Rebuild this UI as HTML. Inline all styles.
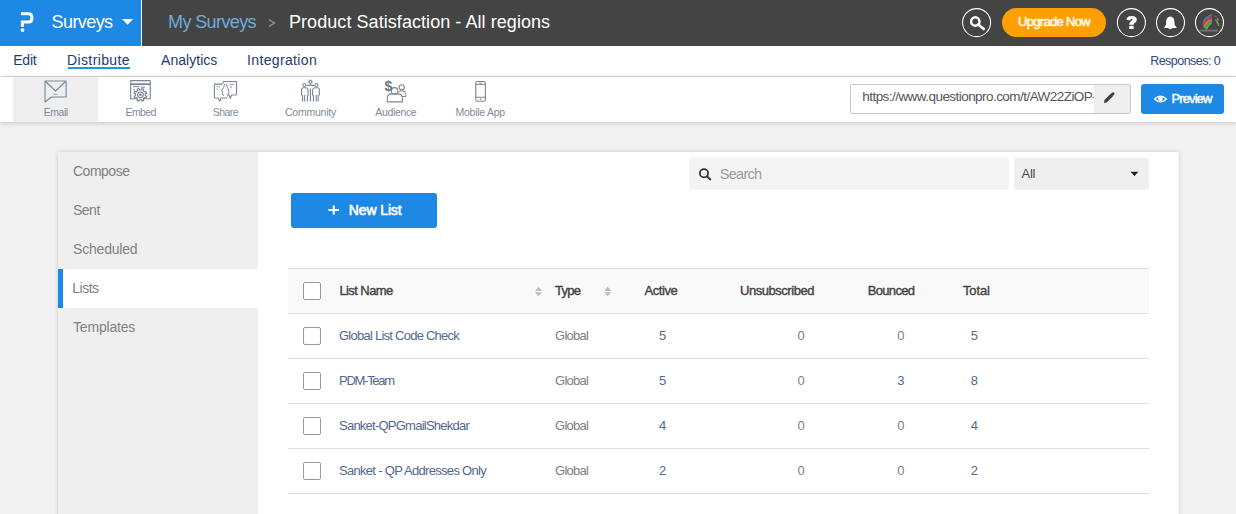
<!DOCTYPE html>
<html><head><meta charset="utf-8">
<style>
*{box-sizing:border-box;margin:0;padding:0}
html,body{width:1236px;height:514px;overflow:hidden;background:#f2f2f2;font-family:"Liberation Sans",sans-serif}
.a{position:absolute;white-space:nowrap;line-height:1}
#hdr{position:absolute;left:0;top:0;width:1236px;height:46px;background:#444}
#brand{position:absolute;left:0;top:0;width:141px;height:46px;background:#1e88e5}
#sep{position:absolute;left:141px;top:0;width:1px;height:46px;background:#fafafa}
#nav{position:absolute;left:0;top:46px;width:1236px;height:31px;background:#fff;border-bottom:1px solid #dcdcdc}
#tools{position:absolute;left:0;top:77px;width:1236px;height:45px;background:#fff;box-shadow:0 1px 5px rgba(0,0,0,.2)}
.nv{font-size:14px;color:#1d3c6e;top:53.2px}
.tl{font-size:10.5px;color:#7f8a9c;top:106.6px}
.card{position:absolute;left:58px;top:152px;width:1121px;height:380px;background:#fff;box-shadow:0 0 5px rgba(0,0,0,.17)}
.side{position:absolute;left:58px;top:152px;width:200px;height:380px;background:#efefef}
.si{font-size:14px;color:#818181;left:73px;letter-spacing:-0.5px}
.hd{font-size:13px;color:#444;-webkit-text-stroke:0.4px #444;top:284px}
.ln{font-size:13px;color:#52688f;left:339px}
.gl{font-size:13px;color:#808080;left:555px;letter-spacing:-0.73px}
.nb{font-size:13px;color:#52688f}
.ng{font-size:13px;color:#808080}
.cb{position:absolute;left:303px;width:18px;height:18px;border:1px solid #9a9a9a;border-radius:2px;background:#fff}
.hl{position:absolute;left:288px;width:861px;height:1px;background:#dedede}
</style></head><body>
<div id="hdr">
  <div id="brand"></div>
  <div id="sep"></div>
</div>
<div class="a" style="left:51.5px;top:12.9px;color:#fff;font-size:18px;letter-spacing:-0.57px">Surveys</div>
<div class="a" style="left:168px;top:12.5px;color:#70aad9;font-size:18px;letter-spacing:-0.6px">My Surveys</div>
<div class="a" style="left:289px;top:12.5px;color:#fff;font-size:18px;letter-spacing:0.06px">Product Satisfaction - All regions</div>
<div class="a" style="left:1002px;top:8px;width:104px;height:29px;background:#ff9f00;border-radius:15px"></div>
<div class="a" style="left:1018px;top:15px;color:#fff;font-size:13px;-webkit-text-stroke:0.45px #fff;letter-spacing:-0.68px">Upgrade Now</div>

<div id="nav"></div>
<div class="a nv" style="left:13.2px;letter-spacing:-0.2px">Edit</div>
<div class="a nv" style="left:67px;letter-spacing:0.38px">Distribute</div>
<div class="a" style="left:68px;top:67px;width:62px;height:2px;background:#1a9ad9"></div>
<div class="a nv" style="left:161px;letter-spacing:0.04px">Analytics</div>
<div class="a nv" style="left:247px;letter-spacing:0.36px">Integration</div>
<div class="a" style="left:1150.2px;top:55.4px;color:#2a4b80;font-size:12.5px;letter-spacing:-0.53px">Responses: 0</div>

<div id="tools"></div>
<div class="a" style="left:13px;top:77px;width:85px;height:45px;background:#eeeeee"></div>
<div class="a tl" style="left:43.7px;letter-spacing:-0.45px">Email</div>
<div class="a tl" style="left:125.6px;letter-spacing:-0.65px">Embed</div>
<div class="a tl" style="left:212.7px;letter-spacing:-0.5px">Share</div>
<div class="a tl" style="left:285px;letter-spacing:-0.23px">Community</div>
<div class="a tl" style="left:375.3px;letter-spacing:-0.35px">Audience</div>
<div class="a tl" style="left:455.5px;letter-spacing:-0.25px">Mobile App</div>

<div class="a" style="left:850px;top:84px;width:281px;height:30px;border:1px solid #c8c8c8;border-radius:2px;background:#fff;overflow:hidden">
  <div class="a" style="left:11.3px;top:5.3px;font-size:13.5px;color:#555;letter-spacing:-0.55px">https://www.questionpro.com/t/AW22ZiOP-</div>
  <div class="a" style="left:243px;top:0;width:37px;height:28px;background:#eeeeee"></div>
</div>
<div class="a" style="left:1141px;top:84px;width:83px;height:30px;background:#1e88e5;border-radius:3px"></div>
<div class="a" style="left:1171.6px;top:92.3px;color:#fff;font-size:13px;-webkit-text-stroke:0.45px #fff;letter-spacing:-0.92px">Preview</div>

<div class="card"></div>
<div class="side"></div>
<div class="a" style="left:58px;top:269px;width:200px;height:39px;background:#fff"></div>
<div class="a" style="left:58px;top:269px;width:5px;height:39px;background:#1e88e5"></div>
<div class="a si" style="top:163.8px">Compose</div>
<div class="a si" style="top:202.9px">Sent</div>
<div class="a si" style="top:242px;letter-spacing:-0.19px">Scheduled</div>
<div class="a si" style="top:281.1px;left:72.3px">Lists</div>
<div class="a si" style="top:320.2px;letter-spacing:-0.19px">Templates</div>

<div class="a" style="left:689px;top:158px;width:320px;height:32px;background:#f4f4f4;border-radius:2px"></div>
<div class="a" style="left:719.7px;top:166.7px;font-size:14.5px;color:#9b9b9b;letter-spacing:-0.69px">Search</div>
<div class="a" style="left:1014px;top:158px;width:135px;height:32px;background:#efefef;border-radius:3px"></div>
<div class="a" style="left:1021.6px;top:167.2px;font-size:13px;color:#4a4a4a;letter-spacing:-0.32px">All</div>

<div class="a" style="left:291px;top:193px;width:146px;height:35px;background:#1e88e5;border-radius:3px"></div>
<div class="a" style="left:348.8px;top:203.2px;color:#fff;font-size:14px;-webkit-text-stroke:0.6px #fff;letter-spacing:-0.12px">New List</div>

<div class="a" style="left:288px;top:268px;width:861px;height:46px;background:#f9f9f9"></div>
<div class="hl" style="top:268px"></div>
<div class="hl" style="top:313px"></div>
<div class="hl" style="top:358px"></div>
<div class="hl" style="top:403px"></div>
<div class="hl" style="top:448px"></div>
<div class="hl" style="top:493px"></div>

<div class="cb" style="top:282px"></div>
<div class="cb" style="top:327px"></div>
<div class="cb" style="top:372px"></div>
<div class="cb" style="top:417px"></div>
<div class="cb" style="top:462px"></div>

<div class="a hd" style="left:339.4px;letter-spacing:-0.58px">List Name</div>
<div class="a hd" style="left:555px;letter-spacing:-0.7px">Type</div>
<div class="a hd" style="left:644.5px;letter-spacing:-0.43px">Active</div>
<div class="a hd" style="left:740px;letter-spacing:-0.46px">Unsubscribed</div>
<div class="a hd" style="left:867.7px;letter-spacing:-0.66px">Bounced</div>
<div class="a hd" style="left:963px;letter-spacing:-0.15px">Total</div>

<div class="a ln" style="top:329.2px;letter-spacing:-0.75px">Global List Code Check</div>
<div class="a ln" style="top:374.2px;letter-spacing:-1.27px">PDM-Team</div>
<div class="a ln" style="top:419.2px;letter-spacing:-0.76px">Sanket-QPGmailShekdar</div>
<div class="a ln" style="top:464.2px;letter-spacing:-0.7px">Sanket - QP Addresses Only</div>
<div class="a gl" style="top:329.2px">Global</div>
<div class="a gl" style="top:374.2px">Global</div>
<div class="a gl" style="top:419.2px">Global</div>
<div class="a gl" style="top:464.2px">Global</div>

<div class="a nb" style="left:659px;top:329.2px">5</div>
<div class="a ng" style="left:797.5px;top:329.2px">0</div>
<div class="a ng" style="left:897.3px;top:329.2px">0</div>
<div class="a nb" style="left:970.8px;top:329.2px">5</div>

<div class="a nb" style="left:659px;top:374.2px">5</div>
<div class="a ng" style="left:797.5px;top:374.2px">0</div>
<div class="a nb" style="left:897.3px;top:374.2px">3</div>
<div class="a nb" style="left:970.8px;top:374.2px">8</div>

<div class="a nb" style="left:659px;top:419.2px">4</div>
<div class="a ng" style="left:797.5px;top:419.2px">0</div>
<div class="a ng" style="left:897.3px;top:419.2px">0</div>
<div class="a nb" style="left:970.8px;top:419.2px">4</div>

<div class="a nb" style="left:659px;top:464.2px">2</div>
<div class="a ng" style="left:797.5px;top:464.2px">0</div>
<div class="a ng" style="left:897.3px;top:464.2px">0</div>
<div class="a nb" style="left:970.8px;top:464.2px">2</div>

<!-- ICONS overlay -->
<svg width="1236" height="514" viewBox="0 0 1236 514" style="position:absolute;left:0;top:0">
  <!-- P logo -->
  <path d="M20.9 13.7 H28.6 Q31.8 13.7 31.8 16.9 V18.7 Q31.8 21.9 28.6 21.9 H22.4 V26.8" fill="none" stroke="#fff" stroke-width="3"/>
  <circle cx="22.5" cy="30.1" r="1.9" fill="#fff"/>
  <!-- brand caret -->
  <path d="M122 19 H133.2 L127.6 24.8 Z" fill="#fff"/>
  <!-- breadcrumb chevron -->
  <path d="M269 19.6 L274.5 23 L269 26.4" fill="none" stroke="#8a8a8a" stroke-width="1.6"/>
  <!-- header circles -->
  <circle cx="976.6" cy="22.6" r="14" fill="none" stroke="#fff" stroke-width="1.05"/>
  <circle cx="1131.4" cy="22.6" r="14" fill="none" stroke="#fff" stroke-width="1.05"/>
  <circle cx="1170.5" cy="22.6" r="14" fill="none" stroke="#fff" stroke-width="1.05"/>
  <circle cx="1209.5" cy="22.6" r="14" fill="none" stroke="#fff" stroke-width="1.05"/>
  <!-- magnifier -->
  <circle cx="975.3" cy="21.5" r="4.2" fill="none" stroke="#fff" stroke-width="2.4"/>
  <path d="M978.2 24.5 L983.8 29" stroke="#fff" stroke-width="2.6" stroke-linecap="round"/>
  <!-- bell -->
  <path d="M1170.3 16.5 Q1166.5 17 1166.2 21 L1166 24.5 Q1165.5 26 1163.9 27.9 H1176.9 Q1175.1 26 1174.6 24.5 L1174.4 21 Q1174.1 17 1170.3 16.5 Z" fill="#fff"/>
  <path d="M1168.2 27.9 Q1170.3 30.6 1172.5 27.9 Z" fill="#fff"/>
  <!-- help -->
  <path d="M1126.5 19.8 Q1126.7 15.9 1131.6 15.9 Q1136.8 15.9 1136.8 19.6 Q1136.8 21.7 1134.8 22.9 Q1133.7 23.6 1133.7 24.7 H1129.2 Q1129.2 22.6 1131 21.3 Q1132.4 20.5 1132.4 19.7 Q1132.4 18.8 1131.5 18.8 Q1130.5 18.8 1130.3 20.4 Z" fill="#fff"/>
  <rect x="1129.2" y="25.8" width="4.5" height="3.2" fill="#fff"/>
  <!-- rainbow avatar -->
    <rect x="1199.5" y="29.6" width="18.5" height="2" fill="#6e6e6e"/>
  <g fill="none" stroke-width="1.5" stroke-linecap="butt" opacity=".78">
    <path d="M1203 23.5 Q1205 16.5 1212 15" stroke="#2e9fd4"/>
    <path d="M1203.2 25 Q1205.3 18 1212 16.8" stroke="#cf3b8c"/>
    <path d="M1203.6 26.3 Q1206 19.5 1212 18.3" stroke="#e8482a"/>
    <path d="M1204 27.5 Q1206.5 21 1212 19.8" stroke="#f5a11c"/>
    <path d="M1205 28.6 Q1207.5 23 1211.8 21.3" stroke="#3fb3cf"/>
    <path d="M1206.2 29.6 Q1208.5 24.5 1211.6 22.6" stroke="#88c240"/>
    <path d="M1214.3 16.2 L1216.6 16.9" stroke="#cf3b8c"/>
    <path d="M1217.2 18.6 L1218.4 19.9" stroke="#f5a11c"/>
    <path d="M1215 19.6 Q1217 20.5 1218 22" stroke="#3fb3cf"/>
    <path d="M1216.4 21.8 Q1218.4 23.4 1219 25.8" stroke="#88c240"/>
  </g>

  <!-- toolbar icons -->
  <g fill="none" stroke="#7b8594" stroke-width="1.1" stroke-linejoin="round">
    <!-- email -->
    <path d="M51.5 97 H66.1 V81 H45 V102 Z"/>
    <path d="M45.5 81.5 L55.5 91 L65.6 81.5"/>
    <path d="M53.5 94.3 H57.5" stroke-width=".7"/>
    <!-- embed -->
    <rect x="130.7" y="80.6" width="19.5" height="18.2"/>
    <path d="M130.7 84.2 H150.2" stroke-width="1.8"/>
    <path d="M133 86.7 H139.5 M140.8 87.2 H145" stroke-width="1"/>
    <path d="M133 90 H135" stroke-width="1"/>
    <!-- share -->
    <path d="M222.7 84.1 H215 Q214.4 84.1 214.4 84.8 V97.3 Q214.4 98 215 98 H218 L220 101.2 L220.7 98 H227.3"/>
    <path d="M223.3 83.6 V82.1 Q223.3 81.5 223.9 81.5 H235.9 Q236.5 81.5 236.5 82.1 V94.3 Q236.5 95 235.9 95 H231.7 L230.3 98.4 L229.1 95 H228"/>
    <path d="M224.6 84.1 L223.6 87.6 L221.5 90.8 L222.6 91.5 L222.4 93.2 L222.8 95 L224.2 95.5 M226.2 84.1 L227.6 87.6 L229.2 92.6 L228 93.4 L227.8 95.2 L227.3 96.5" stroke-width="1"/>
    <path d="M216.6 86.8 H220 M216.6 89.1 H218.2 M229.6 84.4 H234 M229.6 86.9 H232" stroke-width="1.1" stroke="#a0a8b2"/>
    <!-- community -->
    <path d="M310.4 80 L312.2 81.9 L310.4 83.8 L308.6 81.9 Z"/>
    <circle cx="304.4" cy="85" r="1.5"/>
    <circle cx="316.4" cy="85" r="1.5"/>
    <path d="M301.5 95.5 V89.5 Q301.5 87.8 303.5 87.8 H305.5 Q307.5 87.8 308 89.5 L308.2 95.5"/>
    <path d="M312.5 95.5 L312.7 89.5 Q313.3 87.8 315.3 87.8 H317.3 Q319.3 87.8 319.3 89.5 V95.5"/>
    <path d="M306.5 85.6 Q310.4 84.6 314.3 85.6"/>
    <path d="M302.6 95 V101.5 M304.6 95 V101.5 M307.4 95 V101.5 M310.4 88.5 V101.5 M313.4 95 V101.5 M316.2 95 V101.5 M318.2 95 V101.5"/>
    <!-- audience -->
    <circle cx="394.6" cy="90.9" r="3.3"/>
    <circle cx="401.7" cy="87.3" r="2.6"/>
    <path d="M387.3 101.9 V98.5 Q387.3 93.9 392 93.9 H397.6 Q402.4 93.9 402.4 98.5 V101.9 Z"/>
    <path d="M398.3 92.5 Q399.6 90.8 401.8 90.8 Q405.8 90.8 405.8 94.5 V96.5 H402" stroke-width="1"/>
    <!-- mobile -->
    <rect x="475.8" y="81.5" width="9.6" height="19.8" rx="1.5"/>
    <path d="M475.8 84.3 H485.4 M475.8 97.3 H485.4" stroke-width="1"/>
    <path d="M479.2 83.2 H481.8" stroke-width=".9"/>
  </g>
  <text x="384.4" y="91.2" font-family="Liberation Sans" font-weight="bold" font-size="14" fill="#6a7584">$</text>
  <!-- embed gear -->
  <g transform="translate(140.4 94.8) scale(1.05)">
    <path d="M0.86 -4.62 L1.45 -6.03 L3.24 -5.29 L2.66 -3.87 A4.7 4.7 0 0 1 3.87 -2.66 L5.29 -3.24 L6.03 -1.45 L4.62 -0.86 A4.7 4.7 0 0 1 4.62 0.86 L6.03 1.45 L5.29 3.24 L3.87 2.66 A4.7 4.7 0 0 1 2.66 3.87 L3.24 5.29 L1.45 6.03 L0.86 4.62 A4.7 4.7 0 0 1 -0.86 4.62 L-1.45 6.03 L-3.24 5.29 L-2.66 3.87 A4.7 4.7 0 0 1 -3.87 2.66 L-5.29 3.24 L-6.03 1.45 L-4.62 0.86 A4.7 4.7 0 0 1 -4.62 -0.86 L-6.03 -1.45 L-5.29 -3.24 L-3.87 -2.66 A4.7 4.7 0 0 1 -2.66 -3.87 L-3.24 -5.29 L-1.45 -6.03 L-0.86 -4.62 A4.7 4.7 0 0 1 0.86 -4.62 Z" fill="#fff" stroke="#7b8594" stroke-width="1.1" stroke-linejoin="round"/>
    <circle r="2.7" fill="none" stroke="#7b8594" stroke-width="1.1"/>
    <circle r="1.3" fill="#7b8594"/>
  </g>
  <circle cx="480.6" cy="99.3" r=".8" fill="#7b8594"/>

  <!-- pencil -->
  <path d="M1105.2 101.6 L1111.8 95" stroke="#3c3c3c" stroke-width="3.2"/>
  <path d="M1112.5 94.3 L1113 93.8" stroke="#3c3c3c" stroke-width="3" stroke-linecap="round"/>
  <path d="M1104 102.9 L1104.5 100.6 L1106.3 102.4 Z" fill="#3c3c3c"/>
  <!-- eye -->
  <path d="M1154.6 99 Q1160.5 93.2 1166.4 99 Q1160.5 104.8 1154.6 99 Z" fill="none" stroke="#fff" stroke-width="1.3"/>
  <circle cx="1160.4" cy="98.8" r="2.4" fill="#fff"/>

  <!-- search icon -->
  <circle cx="704" cy="173.3" r="4.1" fill="none" stroke="#333" stroke-width="1.8"/>
  <path d="M707.1 176.5 L710.2 179.3" stroke="#333" stroke-width="2.1" stroke-linecap="round"/>
  <!-- dropdown caret -->
  <path d="M1130.6 171.8 H1138.4 L1134.5 176.1 Z" fill="#222"/>
  <!-- plus -->
  <path d="M333.75 205.6 V214.6 M328.4 210.1 H339.1" stroke="#fff" stroke-width="2"/>
  <!-- sort arrows -->
  <path d="M535 291 L538.5 286.8 L542 291 Z M535 292.2 L538.5 296.3 L542 292.2 Z" fill="#bdbdbd"/>
  <path d="M604.2 291 L607.7 286.8 L611.2 291 Z M604.2 292.2 L607.7 296.3 L611.2 292.2 Z" fill="#bdbdbd"/>
</svg>
</body></html>
